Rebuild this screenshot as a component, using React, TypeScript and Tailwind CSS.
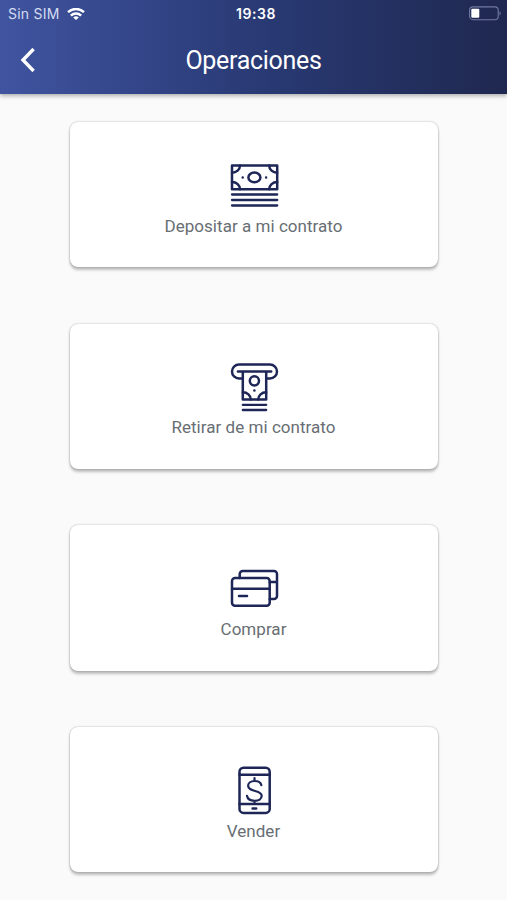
import React from 'react';

interface Operation {
  label: string;
  icon: React.ReactNode;
}

function IconFrame({ children }: { children: React.ReactNode }) {
  return (
    <svg
      className="h-[52px] w-[52px] text-[#1d2656]"
      viewBox="0 0 52 52"
      fill="none"
      stroke="currentColor"
      strokeWidth="2.5"
      strokeLinecap="round"
      strokeLinejoin="round"
    >
      {children}
    </svg>
  );
}

function DepositIcon() {
  return (
    <IconFrame>
      <path d="M4 5.6h45.2v23.6H4z" />
      <path d="M12 5.6a8 7.2 0 0 1-8 7.2M41.2 5.6a8 7.2 0 0 0 8 7.2M12 29.2a8 7.2 0 0 0-8-7.2M41.2 29.2a8 7.2 0 0 1 8-7.2" />
      <ellipse cx="26.4" cy="17.4" rx="6" ry="4.9" />
      <path d="M14.7 17.4h.01M38.1 17.4h.01" />
      <path strokeWidth="2.3" d="M4 34.5h45.2M4 40h45.2M4 45.5h45.2" />
    </IconFrame>
  );
}

function WithdrawIcon() {
  return (
    <IconFrame>
      <path d="M14.8 16.5H11a7 7 0 0 1 0-14h31a7 7 0 0 1 0 14h-3.8" />
      <path d="M9.9 9.6h33.3M14.8 9.6v27.9h23.4V9.6" />
      <circle cx="26.4" cy="18.8" r="4.6" />
      <path d="M26.4 28.5h.01" />
      <path d="M14.8 30.2a8 7.3 0 0 1 8 7.3M38.2 30.2a8 7.3 0 0 0-8 7.3" />
      <path strokeWidth="2.3" d="M14.8 42.8h23.4M14.8 48h23.4" />
    </IconFrame>
  );
}

function BuyIcon() {
  return (
    <IconFrame>
      <rect x="4" y="15" width="37.7" height="27.7" rx="3" />
      <path d="M4 25.7h37.7M11 33.1h8" />
      <path d="M11.7 15v-4a3 3 0 0 1 3-3H46a3 3 0 0 1 3 3v22a3 3 0 0 1-3 3h-4.3M41.7 19H49" />
    </IconFrame>
  );
}

function SellIcon() {
  return (
    <IconFrame>
      <rect x="11.5" y="2.8" width="30.2" height="45.1" rx="4" />
      <path d="M11.5 9.7h30.2M11.5 38.9h30.2M24.6 43.4h3.6" />
      <path
        strokeWidth="2.2"
        d="M33.4 20.2c-.6-2.7-3.2-4.2-6.8-4.2-3.7 0-6.5 1.9-6.5 4.8 0 6.6 13.6 3.8 13.6 10 0 3.2-3.1 5-7.1 5-4.2 0-7.1-1.9-7.6-5M26.5 13v3M26.5 35.8v2"
      />
    </IconFrame>
  );
}

const operations: Operation[] = [
  { label: 'Depositar a mi contrato', icon: <DepositIcon /> },
  { label: 'Retirar de mi contrato', icon: <WithdrawIcon /> },
  { label: 'Comprar', icon: <BuyIcon /> },
  { label: 'Vender', icon: <SellIcon /> },
];

function StatusBar() {
  return (
    <div className="grid h-[27px] grid-cols-3 items-center pr-[6px] pl-[8px] font-['Inter',sans-serif] text-white">
      <div className="flex items-center gap-[7px]">
        <span className="text-[14px] tracking-[0.25px] text-[#d5dcf2]">Sin SIM</span>
        <svg className="h-3 w-[18px]" viewBox="0 0 18 12" fill="none" stroke="currentColor" strokeWidth="2.5">
          <path d="M1 4.2a11.6 11.6 0 0 1 16 0M3.9 7.6a7.3 7.3 0 0 1 10.2 0" />
          <path d="M9 12 6.2 9.6a4 4 0 0 1 5.6 0z" fill="currentColor" stroke="none" />
        </svg>
      </div>
      <span className="pl-[3px] text-center text-[14px] font-semibold tracking-[0.6px]">19:38</span>
      <svg className="h-[15px] w-8 justify-self-end" viewBox="0 0 32 15" fill="none">
        <rect x=".6" y=".9" width="28.6" height="12.8" rx="3.4" stroke="#7179a0" strokeWidth="1.1" />
        <rect x="2.3" y="2.7" width="8" height="9" rx="1" fill="white" />
        <path d="M30.5 5.2c1.6.5 1.6 3.7 0 4.2z" fill="#7179a0" />
      </svg>
    </div>
  );
}

function Header() {
  return (
    <header className="h-[94px] bg-linear-to-r from-[#4054a0] via-[#293a75] to-[#1f2850] shadow-[0_2px_4px_rgba(0,0,0,0.3)]">
      <StatusBar />
      <div className="grid h-[67px] grid-cols-[60px_1fr_60px] items-center">
        <svg className="mb-[2px] ml-[20px] h-6 w-4" viewBox="0 0 16 24" fill="none" stroke="white" strokeWidth="3.4">
          <path d="M13.6 1 3 12l10.6 11" />
        </svg>
        <h1 className="text-center text-[25px] leading-8 tracking-[-0.3px] text-white">Operaciones</h1>
      </div>
    </header>
  );
}

export default function App() {
  return (
    <div className="h-[900px] overflow-hidden bg-[#fafafa] font-['Roboto',sans-serif]">
      <Header />
      <main className="flex flex-col items-center gap-[56.2px] pt-7">
        {operations.map((operation) => (
          <button
            key={operation.label}
            className="flex h-[145.4px] w-[368px] shrink-0 flex-col items-center rounded-[8px] bg-white pt-[38px] shadow-[0_0_2px_rgba(0,0,0,0.32),0_3px_3px_rgba(0,0,0,0.24)]"
          >
            {operation.icon}
            <span className="mt-[1.8px] text-[17px] leading-6 tracking-[0.04px] text-[#686e73]">{operation.label}</span>
          </button>
        ))}
      </main>
    </div>
  );
}
